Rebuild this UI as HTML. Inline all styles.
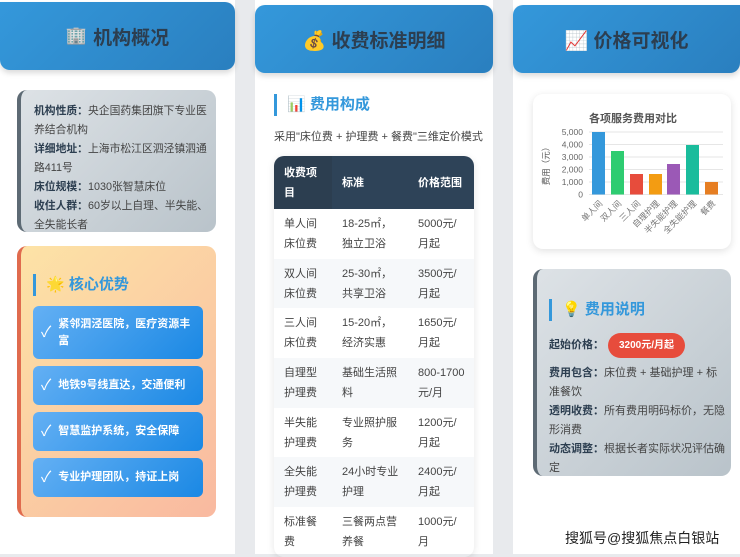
<!DOCTYPE html>
<html><head><meta charset="utf-8"><style>
*{margin:0;padding:0;box-sizing:border-box}
body{width:740px;height:554px;overflow:hidden;background:#e8eaed;font-family:"Liberation Sans","Noto Sans CJK SC",sans-serif;position:relative;color:#333}
.card{position:absolute;background:#fff;top:0;height:554px}
.hdr{position:absolute;left:0;right:0;height:68px;border-radius:10px;background:linear-gradient(135deg,#3498db,#2a7fbf);color:#2c3e50;font-weight:bold;font-size:19px;display:flex;align-items:center;justify-content:center;gap:6px;box-shadow:0 3px 6px rgba(0,0,0,.15)}
.sect{font-size:15px;font-weight:bold;color:#3498db;border-left:3px solid #3498db;padding-left:10px;line-height:22px}
.gray{position:absolute;border-radius:10px;background:linear-gradient(135deg,#dde2e6,#b9c3ca);border-left:4px solid #5d6a74;font-size:11px;line-height:19px;color:#444}
b{color:#2c3e50}
.adv{background:linear-gradient(135deg,#64b0f4,#1a88e4);color:#fff;font-size:11px;font-weight:bold;border-radius:6px;margin-bottom:7px;display:flex;align-items:center;padding:0 4px 0 8px;line-height:17px}
.adv span.c{font-size:15px;margin-right:7px;font-weight:normal}
table{border-collapse:collapse;font-size:11px;width:200px;table-layout:fixed}
td{padding:0 8px 0 10px;height:49.7px;line-height:20px;color:#444;vertical-align:middle}
th{background:#2c3e50;color:#fff;text-align:left;padding:0 8px 0 10px;height:53px;line-height:20px;font-size:11px}
th:nth-child(2),th:nth-child(3){background:#2e4358}
tr:nth-child(odd) td{background:#f6f8fa}
</style></head><body>

<div class="card" style="left:0;width:235px">
 <div class="hdr" style="top:2px;border-radius:0 10px 10px 10px"><span style="font-size:17px">🏢</span>机构概况</div>
 <div class="gray" style="left:17px;top:90px;width:199px;height:142px;padding:12px 2px 0 13px;font-size:10.8px">
  <b>机构性质：</b>央企国药集团旗下专业医养结合机构<br><b>详细地址：</b>上海市松江区泗泾镇泗通路411号<br><b>床位规模：</b>1030张智慧床位<br><b>收住人群：</b>60岁以上自理、半失能、全失能长者
 </div>
 <div style="position:absolute;left:17px;top:246px;width:199px;height:271px;border-radius:10px;background:linear-gradient(135deg,#fde3a6,#f9b9a0);border-left:4px solid #e06b4e;padding:28px 13px 0 12px">
  <div class="sect" style="margin-bottom:10px">🌟 核心优势</div>
  <div class="adv" style="height:53px"><span class="c">✓</span>紧邻泗泾医院，医疗资源丰富</div>
  <div class="adv" style="height:39px"><span class="c">✓</span>地铁9号线直达，交通便利</div>
  <div class="adv" style="height:39px"><span class="c">✓</span>智慧监护系统，安全保障</div>
  <div class="adv" style="height:39px"><span class="c">✓</span>专业护理团队，持证上岗</div>
 </div>
</div>

<div class="card" style="left:255px;width:238px">
 <div class="hdr" style="top:5px">💰 收费标准明细</div>
 <div class="sect" style="position:absolute;left:19px;top:94px">📊 费用构成</div>
 <div style="position:absolute;left:19px;top:128px;font-size:11px;color:#444">采用"床位费 + 护理费 + 餐费"三维定价模式</div>
 <div style="position:absolute;left:19px;top:156px;border-radius:10px;overflow:hidden;box-shadow:0 2px 8px rgba(0,0,0,.1)">
 <table>
  <tr><th style="width:58px">收费项目</th><th style="width:76px">标准</th><th>价格范围</th></tr>
  <tr><td>单人间床位费</td><td>18-25㎡，独立卫浴</td><td>5000元/月起</td></tr>
  <tr><td>双人间床位费</td><td>25-30㎡，共享卫浴</td><td>3500元/月起</td></tr>
  <tr><td>三人间床位费</td><td>15-20㎡，经济实惠</td><td>1650元/月起</td></tr>
  <tr><td>自理型护理费</td><td>基础生活照料</td><td>800-1700元/月</td></tr>
  <tr><td>半失能护理费</td><td>专业照护服务</td><td>1200元/月起</td></tr>
  <tr><td>全失能护理费</td><td>24小时专业护理</td><td>2400元/月起</td></tr>
  <tr><td>标准餐费</td><td>三餐两点营养餐</td><td>1000元/月</td></tr>
 </table></div>
</div>

<div class="card" style="left:513px;width:227px">
 <div class="hdr" style="top:5px;border-radius:10px 0 10px 10px">📈 价格可视化</div>
 <div style="position:absolute;left:20px;top:94px;width:198px;height:155px;border-radius:10px;background:#fff;box-shadow:0 2px 8px rgba(0,0,0,.12)">
  <svg width="198" height="155" style="font-family:'Liberation Sans','Noto Sans CJK SC',sans-serif">
   <text x="100" y="28" font-size="11" font-weight="bold" fill="#555" text-anchor="middle">各项服务费用对比</text>
   <g stroke="#e6e6e6" stroke-width="1">
    <line x1="56" y1="38" x2="190" y2="38"/><line x1="56" y1="50.5" x2="190" y2="50.5"/><line x1="56" y1="63" x2="190" y2="63"/><line x1="56" y1="75.5" x2="190" y2="75.5"/><line x1="56" y1="88" x2="190" y2="88"/><line x1="56" y1="100.5" x2="190" y2="100.5"/>
   </g>
   <g font-size="8.5" fill="#666" text-anchor="end"><text x="50" y="41">5,000</text><text x="50" y="53.5">4,000</text><text x="50" y="66">3,000</text><text x="50" y="78.5">2,000</text><text x="50" y="91">1,000</text><text x="50" y="103.5">0</text></g>
   <text transform="translate(16,70) rotate(-90)" font-size="8.5" fill="#555" text-anchor="middle">费用（元）</text>
   <rect x="59" y="38" width="13" height="62.5" fill="#3498db"/>
   <rect x="78" y="57" width="13" height="43.5" fill="#2ecc71"/>
   <rect x="97" y="80" width="13" height="20.5" fill="#e74c3c"/>
   <rect x="116" y="80" width="13" height="20.5" fill="#f39c12"/>
   <rect x="134" y="70" width="13" height="30.5" fill="#9b59b6"/>
   <rect x="153" y="51" width="13" height="49.5" fill="#1abc9c"/>
   <rect x="172" y="88" width="13" height="12.5" fill="#e67e22"/>
   <g font-size="8.5" fill="#777" text-anchor="end">
    <text transform="translate(70,110) rotate(-45)">单人间</text><text transform="translate(89,110) rotate(-45)">双人间</text><text transform="translate(108,110) rotate(-45)">三人间</text><text transform="translate(127,110) rotate(-45)">自理护理</text><text transform="translate(145,110) rotate(-45)">半失能护理</text><text transform="translate(164,110) rotate(-45)">全失能护理</text><text transform="translate(183,110) rotate(-45)">餐费</text>
   </g>
  </svg>
 </div>
 <div class="gray" style="left:20px;top:269px;width:198px;height:207px;padding:30px 5px 0 12px">
  <div class="sect" style="margin-bottom:12px">💡 费用说明</div>
  <div style="display:flex;align-items:center;margin-bottom:6px"><b>起始价格：</b><span style="background:#e74c3c;color:#fff;font-weight:bold;font-size:10px;border-radius:13px;padding:0 11px;line-height:25px;margin-left:4px">3200元/月起</span></div>
  <b>费用包含：</b>床位费 + 基础护理 + 标准餐饮<br><b>透明收费：</b>所有费用明码标价，无隐形消费<br><b>动态调整：</b>根据长者实际状况评估确定
 </div>
 <div style="position:absolute;left:52px;top:528px;font-size:14px;color:#222;text-shadow:0 0 2px #fff">搜狐号@搜狐焦点白银站</div>
</div>
</body></html>
